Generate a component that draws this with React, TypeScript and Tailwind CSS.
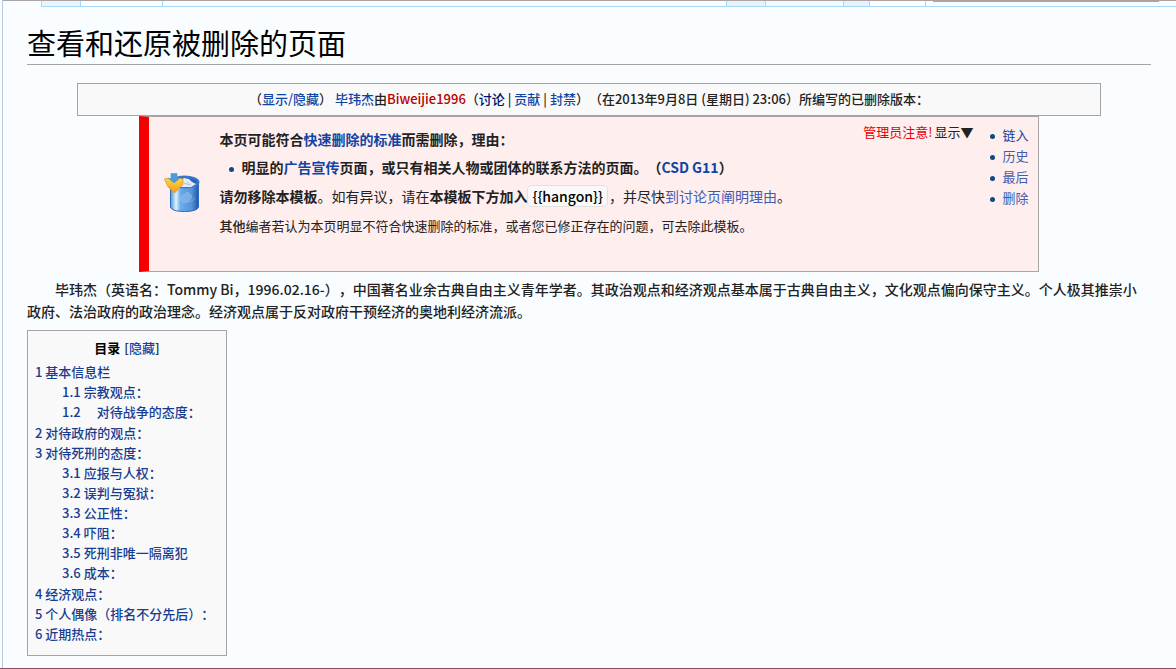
import { ReactNode } from "react";

interface TocEntry {
  number: string;
  title: string;
  children?: TocEntry[];
}

const toc: TocEntry[] = [
  {
    number: "1",
    title: "基本信息栏",
    children: [
      { number: "1.1", title: "宗教观点：" },
      { number: "1.2", title: "　对待战争的态度：" },
    ],
  },
  { number: "2", title: "对待政府的观点：" },
  {
    number: "3",
    title: "对待死刑的态度：",
    children: [
      { number: "3.1", title: "应报与人权：" },
      { number: "3.2", title: "误判与冤狱：" },
      { number: "3.3", title: "公正性：" },
      { number: "3.4", title: "吓阻：" },
      { number: "3.5", title: "死刑非唯一隔离犯" },
      { number: "3.6", title: "成本：" },
    ],
  },
  { number: "4", title: "经济观点：" },
  { number: "5", title: "个人偶像（排名不分先后）：" },
  { number: "6", title: "近期热点：" },
];

const adminLinks = ["链入", "历史", "最后", "删除"];

function WikiLink({
  children,
  className = "text-[#0f45a5]",
}: {
  children: ReactNode;
  className?: string;
}) {
  return (
    <a href="#" className={`${className} hover:underline`}>
      {children}
    </a>
  );
}

function Bullet() {
  return <span className="mt-2.5 size-[5px] shrink-0 rounded-full bg-[#0f4a80]" />;
}

function TabStrip() {
  return (
    <div className="flex h-[7px] border-t border-[#a9a4a6]">
      <div className="ml-[38px] flex grow border-b border-[#a7d7f9]">
        <div className="w-10 border-x border-[#a7d7f9] bg-[#eaf4fd]" />
        <div className="w-[82px] border-r border-[#a7d7f9] bg-white" />
        <div className="grow" />
        <div className="w-10 border-x border-[#a7d7f9] bg-[#e6f3fe]" />
        <div className="w-[78px] border-r border-[#a7d7f9] bg-[#f3faff]" />
        <div className="w-[26px] border-r border-[#a7d7f9] bg-[#e6f3fe]" />
        <div className="w-14 border-r border-[#a7d7f9] bg-white" />
        <div className="mr-[17px] ml-[7px] h-px w-[226px] bg-[#a9a4a6]" />
      </div>
    </div>
  );
}

function TrashIcon() {
  return (
    <svg width="36" height="40" viewBox="0 0 36 40" aria-hidden="true">
      <defs>
        <linearGradient id="can" x1="0" x2="1">
          <stop offset="0" stopColor="#4c96dc" />
          <stop offset="0.2" stopColor="#e2f3fd" />
          <stop offset="0.36" stopColor="#68aae9" />
          <stop offset="0.75" stopColor="#5793da" />
          <stop offset="1" stopColor="#1f57ad" />
        </linearGradient>
        <linearGradient id="arrow" x1="0" y1="0" x2="0" y2="1">
          <stop offset="0" stopColor="#ffd84a" />
          <stop offset="1" stopColor="#f29a12" />
        </linearGradient>
      </defs>
      <path
        d="M6.5 9v25c1 3 6 4.500 14 4.500s13-1.500 14-4.500V9z"
        fill="url(#can)"
        stroke="#2e68b8"
      />
      <path
        d="M19 22l5-3 4 4-3 6-6 1-4-5zM27 29l4-4M15 31l4 4"
        fill="#8ebcf0"
        stroke="#93c2f0"
        opacity="0.6"
      />
      <ellipse
        cx="20.5"
        cy="9"
        rx="14"
        ry="5.5"
        fill="#2d63b5"
        stroke="#3978cc"
        strokeWidth="2"
      />
      <path d="M15 8l5-3 5 1 3 3 4 2-5 3H17z" fill="#e3eaf5" />
      <path d="M18 9l4 2 3-2M23 12l4-1" stroke="#adc0dc" fill="none" />
      <path
        d="M.5 6L5 5l5 4 5-4 4 1-.5 6-8 8L4 14z"
        fill="url(#arrow)"
        stroke="#d99520"
        strokeWidth="0.7"
      />
      <path
        d="M7 .5h6v5h2.500L10 10 4.500 5.500H7z"
        fill="#4a9bdc"
        stroke="#6a9cc0"
        strokeWidth="0.7"
      />
    </svg>
  );
}

function DeletionNotice() {
  return (
    <div className="mx-auto flex min-h-[156px] w-4/5 border border-l-10 border-[#a9a4a6] border-l-[#f50000] bg-[#ffeeee]">
      <div className="w-[70px] shrink-0 pt-14 pl-[15px]">
        <TrashIcon />
      </div>
      <div className="grow pt-3 text-sm leading-5">
        <p className="font-bold">
          本页可能符合<WikiLink>快速删除的标准</WikiLink>而需删除，理由：
        </p>
        <ul className="mt-2 pl-2.5 font-bold">
          <li className="flex gap-[7px]">
            <Bullet />
            <span>
              明显的<WikiLink>广告宣传</WikiLink>
              页面，或只有相关人物或团体的联系方法的页面。（
              <WikiLink>CSD G11</WikiLink>）
            </span>
          </li>
        </ul>
        <p className="mt-[9px]">
          <b>请勿移除本模板</b>。如有异议，请在<b>本模板下方加入</b>
          <code className="mr-px rounded-sm border border-[#e4e0e0] bg-[#f9f9f9] px-1 font-['Noto_Sans_CJK_SC',sans-serif] font-medium text-black">
            {"{{hangon}}"}
          </code>
          ，并尽快
          <WikiLink className="text-[#3f5cae]">到讨论页阐明理由</WikiLink>。
        </p>
        <p className="mt-2.5 text-[13px]">
          <span className="font-medium">其他</span>
          编者若认为本页明显不符合快速删除的标准，或者您已修正存在的问题，可去除此模板。
        </p>
      </div>
      <div className="flex shrink-0 pr-[9px] text-[13px]">
        <div className="flex gap-0.5 pt-[5px] leading-5">
          <span className="text-[#e60000]">管理员注意!</span>
          <button type="button" className="self-start">
            显示▼
          </button>
        </div>
        <ul className="pt-[7px] pl-4 leading-[21px]">
          {adminLinks.map((label, idx) => (
            <li key={label} className="flex gap-2">
              <Bullet />
              <WikiLink
                className={idx === 0 ? "text-[#16409c]" : "text-[#3f5cae]"}
              >
                {label}
              </WikiLink>
            </li>
          ))}
        </ul>
      </div>
    </div>
  );
}

function TocList({ entries }: { entries: TocEntry[] }) {
  return (
    <ul>
      {entries.map((entry) => (
        <li key={entry.number}>
          <WikiLink className="text-[#163d92]">
            {entry.number} {entry.title}
          </WikiLink>
          {entry.children && (
            <div className="pb-px pl-[27px]">
              <TocList entries={entry.children} />
            </div>
          )}
        </li>
      ))}
    </ul>
  );
}

export default function App() {
  return (
    <div className="flex min-h-screen flex-col border-b border-[#8d4a64] bg-[#fafdff] font-['Noto_Sans_CJK_SC',sans-serif] text-[#222222] [text-spacing-trim:space-all]">
      <div className="ml-0.5 grow border-l border-[#b5cbe2]">
        <TabStrip />
        <main className="mr-[25px] ml-6 pb-3">
          <h1 className="mt-[18px] border-b border-[#a3a3a8] pb-1 text-[29px] leading-[35px] text-black">
            查看和还原被删除的页面
          </h1>

          <div className="mx-[50px] mt-[18px] border border-[#a3a3a8] bg-[#f9f9f9] pt-[5px] pb-[7px] text-center text-[13px] leading-[19px] font-medium">
            （<WikiLink>显示/隐藏</WikiLink>） <WikiLink>毕玮杰</WikiLink>由
            <WikiLink className="text-[#ba0000]">Biweijie1996</WikiLink>（
            <WikiLink className="text-[#00106c]">讨论</WikiLink> |{" "}
            <WikiLink>贡献</WikiLink> | <WikiLink>封禁</WikiLink>
            ）（在2013年9月8日 (星期日) 23:06）所编写的已删除版本：
          </div>

          <DeletionNotice />

          <p className="mt-1.5 pr-1 indent-7 text-sm leading-[22px] font-medium">
            毕玮杰（英语名：Tommy
            Bi，1996.02.16-），中国著名业余古典自由主义青年学者。其政治观点和经济观点基本属于古典自由主义，文化观点偏向保守主义。个人极其推崇小政府、法治政府的政治理念。经济观点属于反对政府干预经济的奥地利经济流派。
          </p>

          <nav
            aria-labelledby="toc-title"
            className="mt-2 w-[200px] border border-[#a3a3a8] bg-[#f9f9f9] px-[7px] pt-[7px] pb-[11px] text-[13px] leading-5 font-medium"
          >
            <div className="mb-1 flex justify-center gap-1">
              <h2 id="toc-title" className="font-bold text-black">
                目录
              </h2>
              <span>
                [<WikiLink>隐藏</WikiLink>]
              </span>
            </div>
            <TocList entries={toc} />
          </nav>
        </main>
      </div>
    </div>
  );
}
